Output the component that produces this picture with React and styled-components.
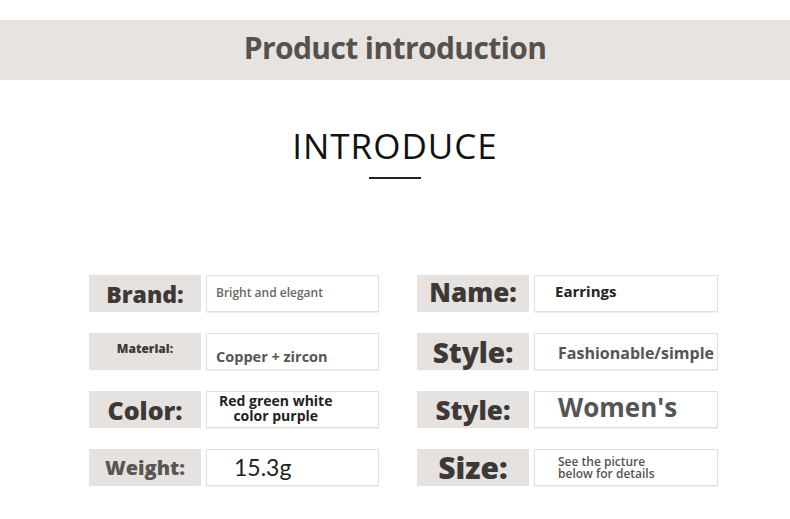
import React from 'react';
import styled, { createGlobalStyle } from 'styled-components';

const GlobalStyle = createGlobalStyle`
  html, body {
    margin: 0;
    padding: 0;
    background: #ffffff;
  }
  body {
    font-family: "Open Sans", "Liberation Sans", sans-serif;
    width: 790px;
    height: 519px;
    overflow: hidden;
  }
`;

const Page = styled.div`
  width: 790px;
  height: 519px;
  padding-top: 20px;
  box-sizing: border-box;
  background: #fff;
`;

const Banner = styled.header`
  height: 60px;
  background: #e7e3e0;
  display: flex;
  align-items: center;
  justify-content: center;
`;

const BannerTitle = styled.h1`
  margin: 0 0 5px 0;
  font-family: "Open Sans", sans-serif;
  font-weight: 700;
  font-size: 30px;
  letter-spacing: -0.6px;
  color: #57504c;
  line-height: 1;
`;

const Heading = styled.section`
  display: flex;
  flex-direction: column;
  align-items: center;
  padding-top: 42px;
`;

const HeadingText = styled.h2`
  margin: 0;
  font-family: "Open Sans", sans-serif;
  font-weight: 400;
  font-size: 35px;
  letter-spacing: 1px;
  line-height: 48px;
  color: #111;
`;

const Rule = styled.div`
  width: 52px;
  height: 2px;
  background: #222;
  margin-top: 7px;
`;

const Grid = styled.div`
  display: grid;
  grid-template-columns: 290px 301px;
  column-gap: 38px;
  row-gap: 21px;
  margin: 96px 0 0 89px;
`;

const Field = styled.div`
  display: flex;
  gap: 5px;
  height: 37px;
`;

const Label = styled.div`
  width: 112px;
  flex: none;
  background: #e5e2df;
  display: flex;
  align-items: center;
  justify-content: center;
  padding-bottom: ${p => p.$lift || 0}px;
  box-sizing: border-box;
  font-family: "Open Sans", sans-serif;
  font-weight: 800;
  font-size: ${p => p.$size}px;
  color: ${p => p.$color || '#3d3937'};
  white-space: nowrap;
`;

const Value = styled.div`
  flex: 1;
  background: #fff;
  border: 1px solid #e2dfdc;
  box-shadow: 0 1px 1px rgba(0, 0, 0, 0.06);
  display: flex;
  align-items: center;
  padding-left: ${p => p.$pad}px;
  padding-top: ${p => p.$drop || 0}px;
  padding-bottom: ${p => p.$rise || 0}px;
  box-sizing: border-box;
  font-family: ${p => p.$serif ? '"Lato", "Liberation Sans", sans-serif' : '"Open Sans", sans-serif'};
  font-weight: ${p => p.$weight || 700};
  font-size: ${p => p.$size}px;
  line-height: ${p => p.$lh || 1.2};
  color: ${p => p.$color || '#555'};
  white-space: nowrap;
`;

const Centered = styled.span`
  display: inline-block;
  text-align: center;
`;

const left = [
  {
    label: 'Brand:', lsize: 23,
    value: 'Bright and elegant', vsize: 12, pad: 9, weight: 600, color: '#6a6664',
  },
  {
    label: 'Material:', lsize: 12, lift: 6,
    value: 'Copper + zircon', vsize: 14.5, pad: 9, drop: 10, color: '#555',
  },
  {
    label: 'Color:', lsize: 25,
    value: <Centered>Red green white<br />color purple</Centered>,
    vsize: 14, pad: 12, lh: 1.05, color: '#222', rise: 2,
  },
  {
    label: 'Weight:', lsize: 20, lcolor: '#5a5653',
    value: '15.3g', vsize: 23, pad: 27, weight: 400, serif: true, color: '#222',
  },
];

const right = [
  {
    label: 'Name:', lsize: 26, lift: 4,
    value: 'Earrings', vsize: 15, pad: 20, color: '#222', rise: 6,
  },
  {
    label: 'Style:', lsize: 28,
    value: 'Fashionable/simple', vsize: 16, pad: 23, color: '#555', drop: 4,
  },
  {
    label: 'Style:', lsize: 26,
    value: "Women's", vsize: 26, pad: 23, color: '#555', rise: 4,
  },
  {
    label: 'Size:', lsize: 30,
    value: <span>See the picture<br />below for details</span>,
    vsize: 12, pad: 23, lh: 1.0, weight: 600, color: '#555',
  },
];

function Row({ item }) {
  return (
    <Field>
      <Label $size={item.lsize} $lift={item.lift} $color={item.lcolor}>
        {item.label}
      </Label>
      <Value
        $pad={item.pad}
        $size={item.vsize}
        $weight={item.weight}
        $color={item.color}
        $drop={item.drop}
        $rise={item.rise}
        $lh={item.lh}
        $serif={item.serif}
      >
        {item.value}
      </Value>
    </Field>
  );
}

export default function App() {
  const rows = left.map((l, i) => [l, right[i]]);
  return (
    <>
      <GlobalStyle />
      <Page>
        <Banner>
          <BannerTitle>Product introduction</BannerTitle>
        </Banner>
        <Heading>
          <HeadingText>INTRODUCE</HeadingText>
          <Rule />
        </Heading>
        <Grid>
          {rows.map(([l, r], i) => (
            <React.Fragment key={i}>
              <Row item={l} />
              <Row item={r} />
            </React.Fragment>
          ))}
        </Grid>
      </Page>
    </>
  );
}
